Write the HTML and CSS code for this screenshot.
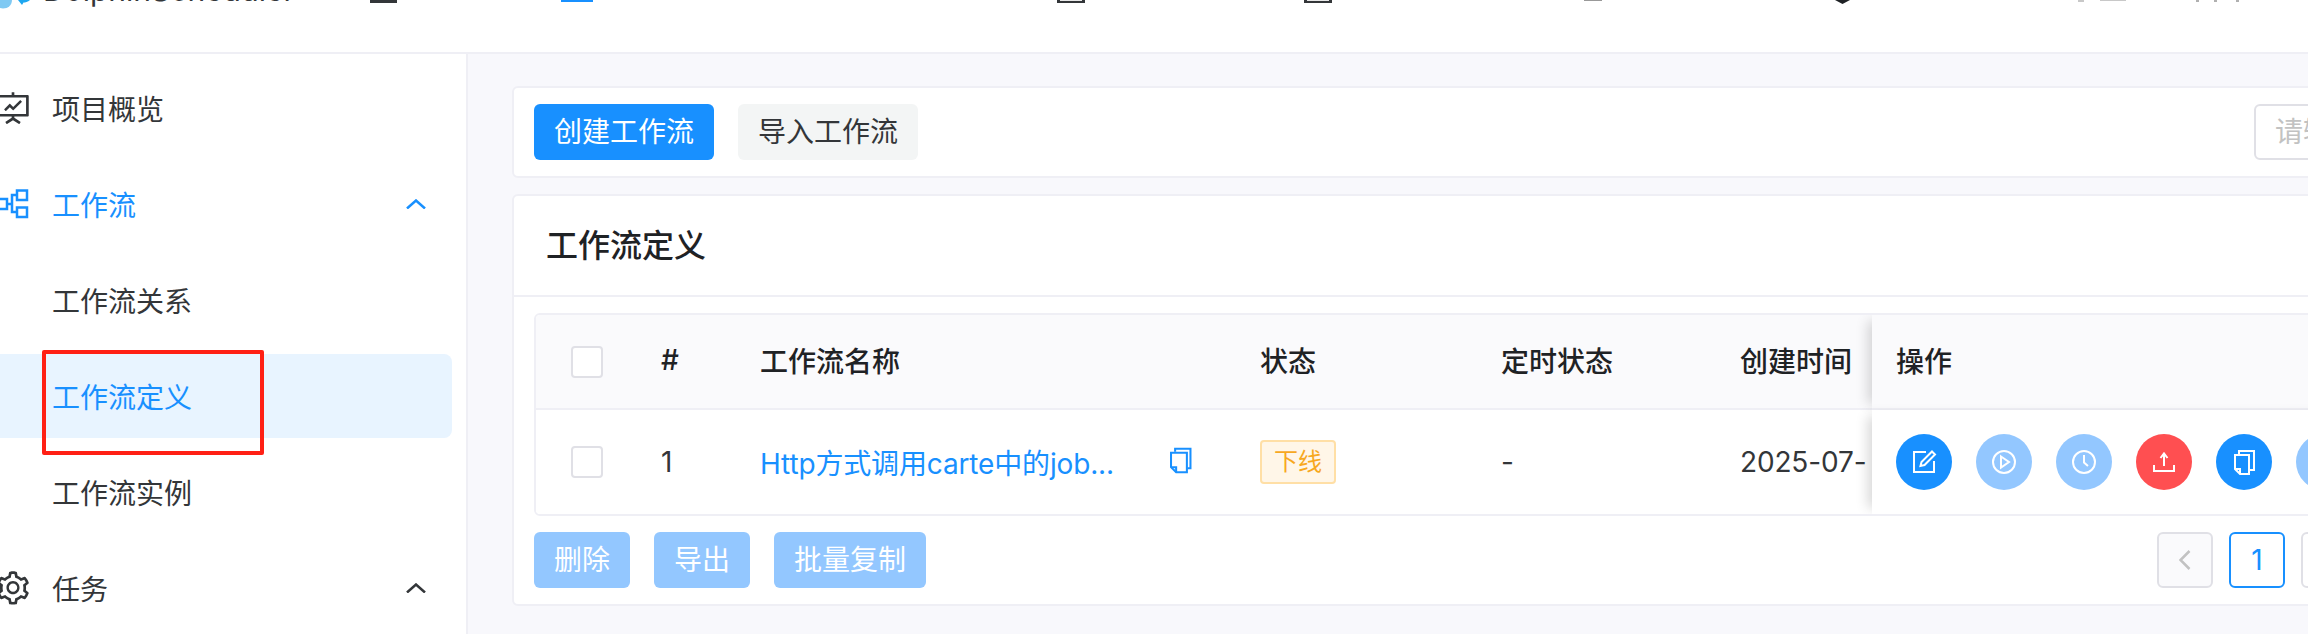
FILE: index.html
```html
<!DOCTYPE html>
<html lang="zh-CN">
<head>
  <meta charset="UTF-8">
  <title>DolphinScheduler</title>
  <link rel="stylesheet" href="styles.css">
</head>
<body>

<header class="topbar">
  <div class="brand">
    <svg class="brand-logo" width="34" height="10" viewBox="0 0 34 10">
      <path d="M0 0H12C12 5 8 8.500 3 8.500C2 8.500 1 8.300 0 8Z" fill="#7fc9f3"/>
      <path d="M18 0H30C28 2 25 2.500 23.500 2.500L22 5Z" fill="#1ea7f0"/>
    </svg>
    <span class="brand-name">DolphinScheduler</span>
  </div>
  <!-- bottoms of the nav icons, the rest is cut off by the screenshot -->
  <svg class="nav-marks" width="1978" height="10" viewBox="330 0 1978 10">
    <rect x="370" y="0" width="27" height="3" fill="#333639"/>
    <rect x="561" y="0" width="32" height="2" fill="#1890ff"/>
    <rect x="1057" y="0" width="28" height="3" fill="#333639"/>
    <rect x="1060" y="0" width="22" height="1" fill="#e8e8e8"/>
    <rect x="1304" y="0" width="28" height="3" fill="#333639"/>
    <rect x="1307" y="0" width="22" height="1" fill="#e8e8e8"/>
    <rect x="1584" y="0" width="18" height="1" fill="#999999"/>
    <path d="M1835 0H1850L1842.500 4Z" fill="#1f2225"/>
    <rect x="2078" y="0" width="6" height="2" fill="#c8c8c8"/>
    <rect x="2100" y="0" width="26" height="1" fill="#c8c8c8"/>
    <rect x="2196" y="0" width="3" height="2" fill="#b0b0b0"/>
    <rect x="2214" y="0" width="3" height="2" fill="#b0b0b0"/>
    <rect x="2236" y="0" width="3" height="2" fill="#b0b0b0"/>
  </svg>
</header>

<div class="layout">
  <aside class="sidebar">
    <div class="menu-item">
      <svg class="menu-icon" viewBox="0 0 1024 1024" fill="#333639">
        <path d="M312.1 591.5c3.100 3.100 8.200 3.100 11.300 0l101.800-101.800 86.100 86.200c3.100 3.100 8.200 3.100 11.300 0l226.300-226.500c3.100-3.100 3.100-8.200 0-11.300l-36.800-36.800a8.030 8.030 0 0 0-11.300 0L517 485.300l-86.100-86.200a8.030 8.030 0 0 0-11.300 0L275.300 543.400a8.030 8.030 0 0 0 0 11.300l36.800 36.800z"/>
        <path d="M904 160H548V96c0-4.400-3.600-8-8-8h-56c-4.400 0-8 3.600-8 8v64H120c-17.700 0-32 14.300-32 32v520c0 17.700 14.300 32 32 32h356.400v32L311.600 884.100a7.920 7.920 0 0 0-2.300 11l30.300 47.200v.1c2.400 3.700 7.400 4.700 11.100 2.300L512 838.900l161.300 105.800c3.700 2.400 8.700 1.400 11.100-2.300v-.1l30.300-47.200a8 8 0 0 0-2.300-11L548 776.300V744h356c17.700 0 32-14.300 32-32V192c0-17.700-14.300-32-32-32zm-40 512H160V232h704v440z"/>
      </svg>
      <span class="menu-text">项目概览</span>
    </div>
    <div class="menu-item is-open">
      <svg class="menu-icon" viewBox="0 0 38 38" fill="none" stroke="#1890ff" stroke-width="2.500">
        <rect x="3" y="14" width="10" height="10"/>
        <rect x="23" y="5.500" width="10" height="9.500"/>
        <rect x="23" y="22.500" width="10" height="9.500"/>
        <path d="M13 19H18M23 10H18V27H23"/>
      </svg>
      <span class="menu-text">工作流</span>
      <svg class="chevron" width="20" height="10" viewBox="0 0 20 10"><path d="M1 9.500L10 1.500L19 9.500"/></svg>
    </div>
    <div class="menu-item sub"><span class="menu-text">工作流关系</span></div>
    <div class="menu-item sub is-active"><span class="menu-text">工作流定义</span></div>
    <div class="menu-item sub"><span class="menu-text">工作流实例</span></div>
    <div class="menu-item">
      <svg class="menu-icon" viewBox="0 0 1024 1024" fill="#333639">
        <path d="M924.800 625.700l-65.500-56c3.100-19 4.700-38.400 4.700-57.800s-1.600-38.800-4.700-57.800l65.500-56a32.030 32.030 0 0 0 9.300-35.200l-.9-2.600a443.740 443.740 0 0 0-79.700-137.900l-1.800-2.100a32.120 32.120 0 0 0-35.100-9.500l-81.300 28.900c-30-24.600-63.500-44-99.700-57.600l-15.700-85a32.050 32.050 0 0 0-25.800-25.700l-2.700-.5c-52.100-9.400-106.900-9.400-159 0l-2.700.5a32.050 32.050 0 0 0-25.800 25.700l-15.800 85.400a351.860 351.860 0 0 0-99 57.400l-81.900-29.100a32 32 0 0 0-35.100 9.500l-1.800 2.100a446.020 446.020 0 0 0-79.700 137.900l-.9 2.600c-4.500 12.500-.8 26.500 9.300 35.200l66.300 56.600c-3.100 18.800-4.600 38-4.600 57.100 0 19.200 1.500 38.400 4.600 57.100L99 625.500a32.030 32.030 0 0 0-9.300 35.200l.9 2.600c18.100 50.400 44.900 96.900 79.700 137.900l1.800 2.100a32.120 32.120 0 0 0 35.100 9.500l81.900-29.100c29.800 24.500 63.100 43.900 99 57.400l15.800 85.400a32.050 32.050 0 0 0 25.800 25.700l2.700.5a449.400 449.400 0 0 0 159 0l2.700-.5a32.050 32.050 0 0 0 25.800-25.700l15.700-85a350 350 0 0 0 99.700-57.600l81.300 28.900a32 32 0 0 0 35.100-9.500l1.800-2.100c34.800-41.100 61.600-87.500 79.700-137.900l.9-2.600c4.500-12.300.8-26.300-9.300-35zM788.300 465.900c2.500 15.100 3.800 30.600 3.800 46.100s-1.300 31-3.800 46.100l-6.600 40.100 74.700 63.900a370.030 370.030 0 0 1-42.600 73.600L721 702.800l-31.400 25.800c-23.900 19.600-50.500 35-79.300 45.800l-38.100 14.300-17.900 97a377.500 377.500 0 0 1-85 0l-17.900-97.200-37.800-14.500c-28.500-10.800-55-26.200-78.700-45.700l-31.400-25.900-93.400 33.200c-17-22.900-31.200-47.600-42.600-73.600l75.500-64.500-6.500-40c-2.400-14.900-3.700-30.300-3.700-45.500 0-15.300 1.200-30.600 3.700-45.500l6.500-40-75.500-64.500c11.300-26.100 25.600-50.700 42.600-73.600l93.400 33.200 31.400-25.900c23.700-19.500 50.200-34.900 78.700-45.700l37.900-14.300 17.900-97.200c28.100-3.200 56.800-3.200 85 0l17.900 97 38.100 14.300c28.700 10.800 55.400 26.200 79.300 45.800l31.400 25.800 92.800-32.900c17 22.900 31.200 47.600 42.600 73.600L781.800 426l6.500 39.900zM512 326c-97.200 0-176 78.800-176 176s78.800 176 176 176 176-78.800 176-176-78.800-176-176-176zm79.200 255.200A111.600 111.600 0 0 1 512 614c-29.900 0-58-11.700-79.200-32.800A111.600 111.600 0 0 1 400 502c0-29.900 11.700-58 32.800-79.200C454 401.600 482.100 390 512 390c29.900 0 58 11.600 79.200 32.800A111.600 111.600 0 0 1 624 502c0 29.900-11.700 58-32.800 79.200z"/>
      </svg>
      <span class="menu-text">任务</span>
      <svg class="chevron" width="20" height="10" viewBox="0 0 20 10"><path d="M1 9.500L10 1.500L19 9.500"/></svg>
    </div>
  </aside>

  <main class="content">
    <section class="card toolbar">
      <button class="btn btn-primary">创建工作流</button>
      <button class="btn btn-default">导入工作流</button>
      <input class="search" type="text" placeholder="请输入关键词">
    </section>

    <section class="card">
      <h2 class="card-title">工作流定义</h2>
      <div class="card-body">
        <div class="table-wrap">
          <table class="table">
            <colgroup>
              <col class="col-check"><col class="col-num"><col class="col-name">
              <col class="col-status"><col class="col-timing"><col class="col-created"><col class="col-ops">
            </colgroup>
            <thead>
              <tr>
                <th><div class="checkbox"></div></th>
                <th>#</th>
                <th>工作流名称</th>
                <th>状态</th>
                <th>定时状态</th>
                <th>创建时间</th>
                <th class="fixed">操作</th>
              </tr>
            </thead>
            <tbody>
              <tr>
                <td><div class="checkbox"></div></td>
                <td>1</td>
                <td>
                  <div class="name-cell">
                    <a class="wf-link">Http方式调用carte中的job...</a>
                    <svg class="copy-small" width="22" height="28" viewBox="18 15 21.500 26" fill="none" stroke="#1890ff" stroke-width="2">
                      <path d="M19 21H34.500V40H24L19 35Z"/><path d="M19 35H24V40"/><path d="M23 20V17H38V36H35"/>
                    </svg>
                  </div>
                </td>
                <td><span class="tag">下线</span></td>
                <td>-</td>
                <td><div class="date-text">2025-07-</div></td>
                <td class="fixed">
                  <div class="actions">
                    <button class="round blue">
                      <svg viewBox="0 0 56 56"><path d="M30 18H18V38H38V27"/><path d="M36 17.500L39 20.500L28.500 31L24.500 32L25.500 28Z"/></svg>
                    </button>
                    <button class="round light">
                      <svg viewBox="0 0 56 56"><circle cx="28" cy="28" r="11"/><path d="M25 22.500L33 28L25 33.500Z"/></svg>
                    </button>
                    <button class="round light">
                      <svg viewBox="0 0 56 56"><circle cx="28" cy="28" r="11"/><path d="M28 21V28.500L32 32"/></svg>
                    </button>
                    <button class="round red">
                      <svg viewBox="0 0 56 56"><path d="M28 32V20M24.500 24L28 19.500L31.500 24"/><path d="M18 31V37H38V31"/></svg>
                    </button>
                    <button class="round blue">
                      <svg viewBox="0 0 56 56"><path d="M19 21H33V40H24L19 35Z"/><path d="M19 35H24V40"/><path d="M23 20V17H38V36H33.500"/></svg>
                    </button>
                    <button class="round light"></button>
                  </div>
                </td>
              </tr>
            </tbody>
          </table>
        </div>

        <div class="table-footer">
          <button class="btn btn-disabled">删除</button>
          <button class="btn btn-disabled">导出</button>
          <button class="btn btn-disabled">批量复制</button>
          <div class="pager">
            <div class="page is-disabled">
              <svg width="12" height="20" viewBox="0 0 12 20"><path d="M10.500 1L1.500 10L10.500 19"/></svg>
            </div>
            <div class="page is-current">1</div>
            <div class="page">
              <svg width="12" height="20" viewBox="0 0 12 20"><path d="M1.500 1L10.500 10L1.500 19"/></svg>
            </div>
          </div>
        </div>
      </div>
    </section>
  </main>
</div>

<!-- red box drawn on top of the screenshot -->
<div class="annotation"></div>

</body>
</html>
```

FILE: styles.css
```css
* {
  box-sizing: border-box;
}
html, body {
  margin: 0;
  padding: 0;
  height: 634px;
  overflow: hidden;
}
body {
  position: relative;
  font-family: Inter, "Noto Sans CJK SC", sans-serif;
  font-size: 28px;
  color: #333639;
  background-color: #fff;
}

/* top bar */
.topbar {
  display: flex;
  align-items: flex-start;
  height: 54px;
  border-bottom: 2px solid #efeff5;
  overflow: hidden;
}
.brand {
  display: flex;
  align-items: flex-start;
  flex: none;
  width: 330px;
}
.brand-logo {
  flex: none;
}
.brand-name {
  margin-top: -30px;
  margin-left: 9px;
  font-size: 30px;
  line-height: 40px;
  color: #333639;
  white-space: nowrap;
}
.nav-marks {
  flex: none;
}

.layout {
  display: flex;
  height: 580px;
}

/* sidebar */
.sidebar {
  flex: none;
  width: 468px;
  padding: 12px 14px 0 0;
  background-color: #fff;
  border-right: 2px solid #efeff5;
  overflow: hidden;
}
.menu-item {
  display: flex;
  align-items: center;
  height: 84px;
  margin-bottom: 12px;
  margin-left: -8px;
  padding: 0 26px 0 2px;
  border-radius: 8px;
  line-height: 40px;
}
.menu-item.sub {
  padding-left: 60px;
}
.menu-item.is-open {
  color: #1890ff;
}
.menu-item.is-active {
  color: #1890ff;
  background-color: #e8f4ff;
}
.menu-text {
  padding-top: 4px;
}
.menu-icon {
  flex: none;
  width: 38px;
  height: 38px;
  margin-right: 20px;
}
.chevron {
  margin-left: auto;
  fill: none;
  stroke: #333639;
  stroke-width: 2.5;
}
.is-open .chevron {
  stroke: #1890ff;
}

/* main area */
.content {
  flex: 1;
  min-width: 0;
  padding: 32px 0 0 44px;
  background-color: #f8f8fc;
  overflow: hidden;
}
.card {
  width: 1902px;
  background-color: #fff;
  border: 2px solid #efeff5;
  border-radius: 6px;
}
.toolbar {
  display: flex;
  gap: 24px;
  height: 92px;
  margin-bottom: 16px;
  padding: 16px 20px;
}
.card-title {
  height: 101px;
  margin: 0;
  padding-left: 32px;
  border-bottom: 2px solid #efeff5;
  font-size: 32px;
  font-weight: 500;
  line-height: 99px;
  color: #1f2225;
}
.card-body {
  padding: 16px 20px;
}

/* buttons */
.btn {
  flex: none;
  height: 56px;
  padding: 0 20px;
  border: none;
  border-radius: 6px;
  font-family: inherit;
  font-size: 28px;
  line-height: 56px;
}
.btn-primary {
  color: #fff;
  background-color: #1890ff;
}
.btn-default {
  color: #333639;
  background-color: #f3f5f5;
}
.btn-disabled {
  color: #fff;
  background-color: #93c7ff;
}
.search {
  flex: none;
  width: 138px;
  height: 56px;
  margin-left: auto;
  padding: 0 0 0 19px;
  border: 2px solid #e0e0e6;
  border-radius: 6px;
  font-family: inherit;
  font-size: 28px;
  outline: none;
}
.search::placeholder {
  color: #c2c2c2;
}

/* table */
.table-wrap {
  border: 2px solid #efeff5;
  border-radius: 6px;
  overflow: hidden;
}
.table {
  width: 1856px;
  table-layout: fixed;
  border-collapse: separate;
  border-spacing: 0;
}
.col-check { width: 101px; }
.col-num { width: 99px; }
.col-name { width: 500px; }
.col-status { width: 241px; }
.col-timing { width: 239px; }
.col-created { width: 156px; }
.col-ops { width: 520px; }
.table th, .table td {
  padding: 0 0 0 24px;
  text-align: left;
  white-space: nowrap;
  overflow: hidden;
  vertical-align: middle;
}
.table th:first-child, .table td:first-child {
  padding: 0;
}
.table th {
  height: 95px;
  padding-bottom: 4px;
  border-bottom: 2px solid #efeff5;
  font-weight: 500;
  color: #1f2225;
  background-color: #fafafc;
}
.table th:first-child {
  padding-bottom: 0;
}
.table td {
  height: 104px;
  letter-spacing: -0.15px;
  background-color: #fff;
}
.table .fixed {
  position: relative;
  overflow: visible;
  box-shadow: -10px 0 12px -6px rgba(0, 0, 0, 0.16);
}
.checkbox {
  width: 32px;
  height: 32px;
  margin: 0 auto;
  background-color: #fff;
  border: 2px solid #e0e0e6;
  border-radius: 4px;
}
.name-cell {
  display: flex;
  align-items: center;
}
.wf-link {
  flex: none;
  width: 410px;
  color: #1890ff;
}
.copy-small {
  flex: none;
  margin-top: -4px;
}
.tag {
  display: inline-block;
  height: 44px;
  padding: 0 12px;
  background-color: #fff6e8;
  border: 2px solid #ffdfa6;
  border-radius: 4px;
  font-size: 24px;
  letter-spacing: 0;
  line-height: 40px;
  color: #f7a81f;
}

/* round action buttons */
.actions {
  display: flex;
  gap: 24px;
}
.round {
  flex: none;
  width: 56px;
  height: 56px;
  padding: 0;
  border: none;
  border-radius: 50%;
}
.round svg {
  display: block;
  width: 56px;
  height: 56px;
  fill: none;
  stroke: #fff;
  stroke-width: 2;
}
.round.blue { background-color: #1890ff; }
.round.light { background-color: #93c7ff; }
.round.red { background-color: #ff4f51; }

/* footer and pagination */
.table-footer {
  display: flex;
  gap: 24px;
  margin-top: 16px;
}
.pager {
  display: flex;
  gap: 16px;
  margin-left: auto;
  margin-right: 35px;
}
.page {
  display: flex;
  align-items: center;
  justify-content: center;
  width: 56px;
  height: 56px;
  border: 2px solid #e0e0e6;
  border-radius: 6px;
}
.page svg {
  fill: none;
  stroke: #333639;
  stroke-width: 2.5;
}
.page.is-disabled {
  background-color: #fafafc;
}
.page.is-disabled svg {
  stroke: #c2c2c2;
}
.page.is-current {
  color: #1890ff;
  border-color: #1890ff;
}

.annotation {
  position: absolute;
  left: 42px;
  top: 350px;
  width: 222px;
  height: 105px;
  border: 4px solid #ff2015;
  border-radius: 2px;
}
```
